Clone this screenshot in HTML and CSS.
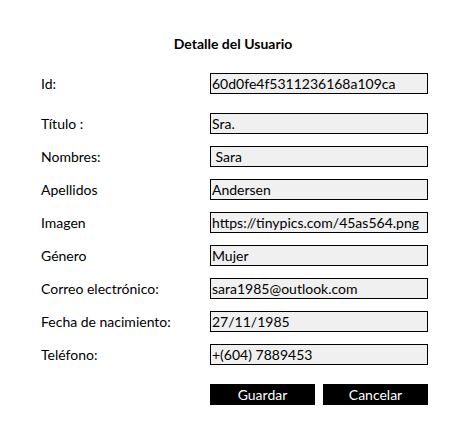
FILE: index.html
```html
<!DOCTYPE html>
<html lang="es">
<head>
<meta charset="utf-8">
<title>Detalle del Usuario</title>
<link rel="stylesheet" href="styles.css">
</head>
<body>
<main class="panel">
  <h1 class="title">Detalle del Usuario</h1>
  <div class="form">
    <div class="row row-id"><span class="label">Id:</span><span class="field">60d0fe4f5311236168a109ca</span></div>
    <div class="row"><span class="label">Título :</span><span class="field">Sra.</span></div>
    <div class="row"><span class="label">Nombres:</span><span class="field">&nbsp;Sara</span></div>
    <div class="row"><span class="label">Apellidos</span><span class="field">Andersen</span></div>
    <div class="row"><span class="label">Imagen</span><span class="field">https://tinypics.com/45as564.png</span></div>
    <div class="row"><span class="label">Género</span><span class="field">Mujer</span></div>
    <div class="row"><span class="label">Correo electrónico:</span><span class="field">sara1985@outlook.com</span></div>
    <div class="row"><span class="label">Fecha de nacimiento:</span><span class="field">27/11/1985</span></div>
    <div class="row"><span class="label">Teléfono:</span><span class="field">+(604) 7889453</span></div>
  </div>
  <div class="actions">
    <button class="btn" type="button">Guardar</button>
    <button class="btn" type="button">Cancelar</button>
  </div>
</main>
</body>
</html>
```
FILE: styles.css
```css
html, body {
  margin: 0;
  padding: 0;
  background: #ffffff;
}
body {
  font-family: Lato, "Open Sans", sans-serif;
  font-size: 14px;
  color: #000000;
}
.panel {
  width: 466px;
  padding-top: 35px;
}
.title {
  margin: 0;
  text-align: center;
  font-size: 14px;
  font-weight: 700;
  line-height: 18px;
}
.form {
  display: flex;
  flex-direction: column;
  gap: 12px;
  padding-left: 41px;
  margin-top: 20px;
}
.row {
  display: flex;
  align-items: center;
  height: 21px;
}
.row-id {
  margin-bottom: 7px;
}
.label {
  width: 169px;
  flex: none;
}
.field {
  box-sizing: border-box;
  width: 218px;
  height: 21px;
  border: 1px solid #000000;
  background: #f0f0f0;
  padding-left: 1px;
  line-height: 19px;
  white-space: nowrap;
  overflow: hidden;
}
.actions {
  display: flex;
  gap: 8px;
  padding-left: 210px;
  margin-top: 19px;
}
.btn {
  width: 105px;
  height: 21px;
  border: 0;
  padding: 0;
  background: #000000;
  color: #ffffff;
  font-family: inherit;
  font-size: 14px;
  line-height: 21px;
}
```
